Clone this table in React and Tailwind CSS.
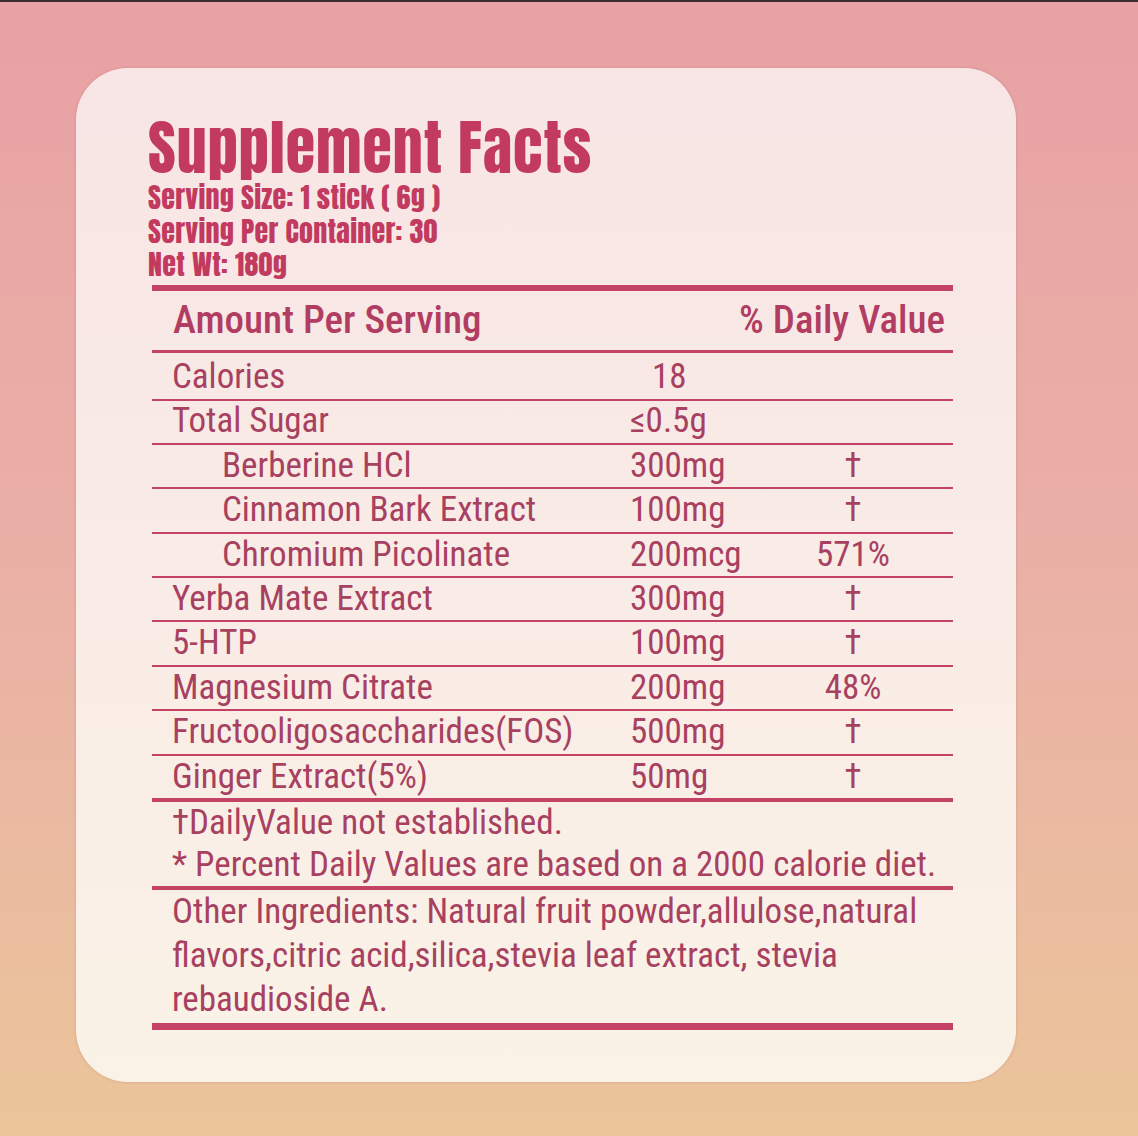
const rows = [
  { name: "Calories", amount: "18", dv: "", amountPad: true, first: true },
  { name: "Total Sugar", amount: "≤0.5g", dv: "" },
  { name: "Berberine HCl", amount: "300mg", dv: "†", indent: true },
  { name: "Cinnamon Bark Extract", amount: "100mg", dv: "†", indent: true },
  { name: "Chromium Picolinate", amount: "200mcg", dv: "571%", indent: true },
  { name: "Yerba Mate Extract", amount: "300mg", dv: "†" },
  { name: "5-HTP", amount: "100mg", dv: "†" },
  { name: "Magnesium Citrate", amount: "200mg", dv: "48%" },
  { name: "Fructooligosaccharides(FOS)", amount: "500mg", dv: "†" },
  { name: "Ginger Extract(5%)", amount: "50mg", dv: "†" },
];

const display = { fontFamily: '"Anton", "Oswald", "Liberation Sans", sans-serif' };
const body = { fontFamily: '"Roboto Condensed", "Open Sans Condensed", "Roboto", sans-serif' };

function Row({ row }) {
  return (
    <div
      className={`flex items-center border-b-2 border-[#c44266] text-[35px] text-[#a8405f] ${
        row.first ? "h-[48px] pt-[3px]" : "h-[44.4px]"
      }`}
    >
      <div className={`w-[478px] ${row.indent ? "pl-[70px]" : "pl-[20px]"}`}>{row.name}</div>
      <div className={`w-[160px] ${row.amountPad ? "pl-[22px]" : ""}`}>{row.amount}</div>
      <div className="w-[120px] pl-[6px] text-center">{row.dv}</div>
    </div>
  );
}

export default function App() {
  return (
    <div className="h-[1136px] w-[1138px] overflow-hidden bg-gradient-to-b from-[#e8a1a4] via-[#eab0a6] to-[#ebc59a]">
      <div className="h-[2px] bg-[#3c2c2e]" />
      <div className="pl-[76px] pt-[66px]">
        <div className="h-[1014px] w-[940px] rounded-[52px] bg-gradient-to-b from-[#f8e5e5] to-[#faf2e7] pl-[76px] pr-[63px] pt-[44px] shadow-[0_0_3px_rgba(160,90,90,0.35)]">
          <div style={display} className="text-[#c23a60]">
            <div className="-ml-[4px] text-[60px] leading-[72px] tracking-[1px]">Supplement Facts</div>
            <div className="-ml-[4px] -mt-[3px] text-[28px] leading-[33.5px] tracking-[0.3px]">Serving Size: 1 stick ( 6g )</div>
            <div className="-ml-[4px] text-[28px] leading-[33.5px] tracking-[0.3px]">Serving Per Container: 30</div>
            <div className="-ml-[4px] text-[28px] leading-[33.5px] tracking-[0.3px]">Net Wt: 180g</div>
          </div>

          <div style={body}>
            <div className="mt-[3px] h-[6px] bg-[#c44266]" />
            <div className="flex h-[59px] items-center justify-between pl-[21px] pr-[8px] text-[39px] font-medium text-[#b23d62]">
              <span>Amount Per Serving</span>
              <span>% Daily Value</span>
            </div>
            <div className="h-[3px] bg-[#c44266]" />
            {rows.map((r) => (
              <Row key={r.name} row={r} />
            ))}
            <div className="h-[2px] bg-[#c44266]" />
            <div className="pl-[20px] text-[35px] leading-[42px] text-[#a8405f]">
              <div>†DailyValue not established.</div>
              <div>* Percent Daily Values are based on a 2000 calorie diet.</div>
            </div>
            <div className="h-[4px] bg-[#c44266]" />
            <div className="pl-[20px] pr-[10px] text-[35px] leading-[44px] text-[#a8405f]">
              Other Ingredients: Natural fruit powder,allulose,natural flavors,citric acid,silica,stevia leaf extract, stevia rebaudioside A.
            </div>
            <div className="mt-[1px] h-[7px] bg-[#c44266]" />
          </div>
        </div>
      </div>
    </div>
  );
}
